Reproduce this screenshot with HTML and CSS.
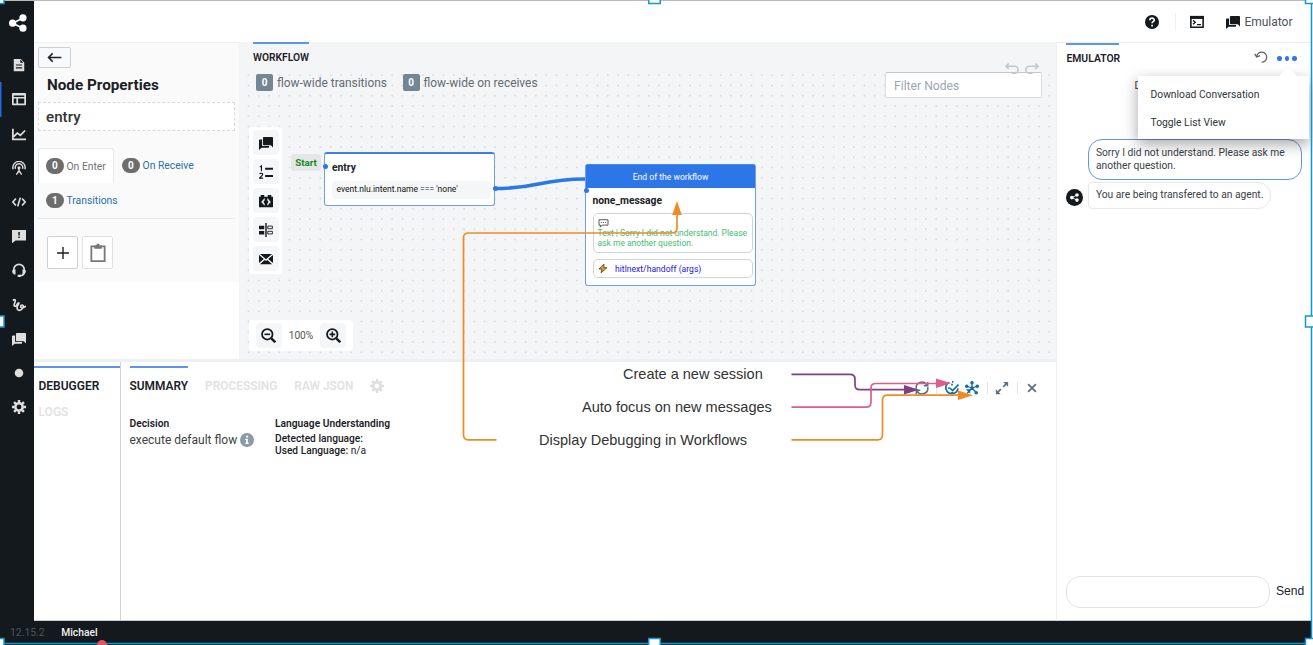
FILE: index.html
```html
<!DOCTYPE html>
<html lang="en">
<head>
<meta charset="utf-8">
<title>Workflow Studio</title>
<link rel="stylesheet" href="styles.css">
</head>
<body>
<svg class="sprite" width="0" height="0">
  <symbol id="share" viewBox="0 0 20 20"><path d="M15.5 4.5 4 10.2l11.5 5.6" fill="none" stroke="currentColor" stroke-width="1.8"/><circle cx="15.5" cy="4.3" r="4"/><circle cx="4" cy="10.2" r="4"/><circle cx="15.5" cy="15.8" r="4"/></symbol>
  <symbol id="doc" viewBox="0 0 16 16"><path fill-rule="evenodd" d="M3 1h7l4 4v10H2V1zM9.500 1.800V5.500H13zM4.500 7.300v1.400h7V7.300zm0 3.400v1.400h7v-1.400z"/></symbol>
  <symbol id="layout" viewBox="0 0 16 16"><path fill-rule="evenodd" d="M1 1h14q1 0 1 1v12q0 1-1 1H1q-1 0-1-1V2q0-1 1-1zm1 3v1.700h12V4zm0 3.500V13h3V7.500zm5 0V13h7V7.500z"/></symbol>
  <symbol id="chart" viewBox="0 0 16 16"><path d="M1 2v12h15M2 11l4-4 3.500 2.500L15 4" fill="none" stroke="currentColor" stroke-width="2"/></symbol>
  <symbol id="antenna" viewBox="0 0 16 16"><g fill="none" stroke="currentColor" stroke-width="1.600"><path d="M1.300 9.500A7 7 0 1 1 14.700 9.500M4 9a4.300 4.300 0 1 1 8 0"/><path d="M8 8v5M8 11l-3 4.500M8 11l3 4.500" /></g><circle cx="8" cy="7.800" r="1.800"/></symbol>
  <symbol id="code" viewBox="0 0 16 16"><path d="M4.500 4 1 8l3.500 4M11.500 4 15 8l-3.500 4M9.500 3l-3 10" fill="none" stroke="currentColor" stroke-width="1.900"/></symbol>
  <symbol id="alertchat" viewBox="0 0 16 16"><path fill-rule="evenodd" d="M0 1h16v12H4l-3.500 3H0zM7.200 3.500v4h1.700v-4zm0 5v1.700h1.700V8.500z"/></symbol>
  <symbol id="headset" viewBox="0 0 16 16"><path d="M2 10V7.500a6 6 0 0 1 12 0V10c0 3-2 4.500-5 4.500" fill="none" stroke="currentColor" stroke-width="1.900"/><path d="M0 8.500 4 7v6H2.500Q0 12 0 8.500zM16 8.500 12 7v6h1.500Q16 12 16 8.500zM6.500 13.500H10V16H6.500z"/></symbol>
  <symbol id="squiggle" viewBox="0 0 16 16"><path d="M1 3C3 1 4.500 2 3.500 4.500S1.500 9 3.500 9.500 6 5.500 7.500 5.500 5.500 9 5.800 11.500 8.500 15 11 13s2.500-5 .5-5-2.500 3.500.5 3 2-1.500 4-1.500" fill="none" stroke="currentColor" stroke-width="1.900"/></symbol>
  <symbol id="chat" viewBox="0 0 16 16"><path d="M5.500 1H15q1 0 1 1v11l-2.500-2.500h-8q-1 0-1-1V2q0-1 1-1zM1 4h2.500v6.500q0 1 1 1H11.500v1q0 1-1 1H3L0 16V5q0-1 1-1z"/></symbol>
  <symbol id="dot" viewBox="0 0 16 16"><circle cx="8" cy="8" r="4.900"/></symbol>
  <symbol id="cog" viewBox="0 0 16 16"><circle cx="8" cy="8" r="4.200" fill="none" stroke="currentColor" stroke-width="2.900"/><path d="M8 0v3M8 13v3M0 8h3M13 8h3M2.350 2.350l2.100 2.100M11.550 11.550l2.100 2.100M2.350 13.650l2.100-2.100M11.550 4.450l2.100-2.100" stroke="currentColor" stroke-width="2.700"/></symbol>
  <symbol id="list" viewBox="0 0 16 16"><path d="M7 3h9v2.300H7zM7 11.500h9v2.300H7z"/><path d="M1 2.500 2.800 1v6M.8 10.500c.2-1.500 3.500-1.600 3.400.3C4.100 12 1.500 13.500.7 15h4" fill="none" stroke="currentColor" stroke-width="1.300"/></symbol>
  <symbol id="codebox" viewBox="0 0 16 16"><path fill-rule="evenodd" d="M2 1h4v2h4V1h4v2h2v12H0V3h2zM6.500 4.500 2.500 9l4 4.500V11L5 9l1.500-2zm3 0V7L11 9l-1.500 2v2.500l4-4.500z"/></symbol>
  <symbol id="split" viewBox="0 0 16 16"><path d="M0 3h6v4H0zM0 9h6v4H0zM7.200 0h1.600v16H7.200z"/><path d="M10 3.500h5.300v3H10zM10 9.500h5.300v3H10z" fill="none" stroke="currentColor"/></symbol>
  <symbol id="mail" viewBox="0 0 16 16"><path d="M0 3.500 5.500 8 0 12.500zM16 3.500 10.500 8l5.500 4.500zM1 2.200h14L8 8.200zM1 14l5.500-5L8 10.200 9.500 9l5.500 5z"/></symbol>
  <symbol id="zoomout" viewBox="0 0 16 16"><circle cx="6.700" cy="6.700" r="5.600" fill="none" stroke="currentColor" stroke-width="1.900"/><path d="m11 11 4.200 4.200" stroke="currentColor" stroke-width="2.600"/><path d="M3.700 5.900h6v1.700h-6z"/></symbol>
  <symbol id="zoomin" viewBox="0 0 16 16"><circle cx="6.700" cy="6.700" r="5.600" fill="none" stroke="currentColor" stroke-width="1.900"/><path d="m11 11 4.200 4.200" stroke="currentColor" stroke-width="2.600"/><path d="M3.700 5.900h2.200V3.700h1.700v2.200h2.200v1.700H7.600v2.200H5.900V7.600H3.700z"/></symbol>
  <symbol id="back" viewBox="0 0 16 12"><path d="M15.500 6H1.500M6 1.500 1.500 6 6 10.500" fill="none" stroke="currentColor" stroke-width="1.700"/></symbol>
  <symbol id="plus" viewBox="0 0 12 12"><path d="M6 0v12M0 6h12" stroke="currentColor" stroke-width="1.400"/></symbol>
  <symbol id="clip" viewBox="0 0 16 20"><path d="M1 3.500h14V19H1z" fill="none" stroke="currentColor" stroke-width="1.900"/><path d="M4 2.500h2Q6.500.5 8 .5t2 2h2V6H4z"/></symbol>
  <symbol id="help" viewBox="0 0 16 16"><circle cx="8" cy="8" r="8"/><path d="M5.500 6c0-3.200 5-3.200 5-.3 0 1.900-2.400 1.900-2.400 3.800M8.100 11v2" fill="none" stroke="#fff" stroke-width="1.900"/></symbol>
  <symbol id="terminal" viewBox="0 0 16 16"><path d="M1 2h14v12H1z" fill="none" stroke="currentColor" stroke-width="1.800"/><path d="M0 1h16v3.500H0z"/><path d="m3.500 6 2.500 2.300-2.500 2.300M8 11h4.500" fill="none" stroke="currentColor" stroke-width="1.500"/></symbol>
  <symbol id="undo" viewBox="0 0 16 12"><path d="M2 3.500h9.500a3.500 3.500 0 0 1 0 7.500H8M5 .5 2 3.500l3 3" fill="none" stroke="currentColor" stroke-width="1.800"/></symbol>
  <symbol id="reset" viewBox="0 0 16 16"><path d="M3 7.500A5.800 5.800 0 1 1 8.500 14M.8 4.500l2.200 3.500 4-1.500" fill="none" stroke="currentColor" stroke-width="1.400"/></symbol>
  <symbol id="info" viewBox="0 0 16 16"><circle cx="8" cy="8" r="8"/><path d="M7 3h2.300v2H7zM6 6.500h3V11h1v1.500H6V11h1V8H6z" fill="#fff"/></symbol>
  <symbol id="refresh" viewBox="0 0 16 16"><path d="M1.500 9A6.500 6.500 0 0 1 13.500 4.500M14.500 7A6.500 6.500 0 0 1 2.500 11.500M14.500 1v4.500H10M1.500 15v-4.500H6" fill="none" stroke="currentColor" stroke-width="1.800"/></symbol>
  <symbol id="autofocus" viewBox="0 0 16 16"><path d="M14.800 8.500A7 7 0 0 1 1.200 9.500 7 7 0 0 1 5 1.700M8 1h1.500M5.500 8l3.200 3L15.500 4M8 3v2M3.500 8h1.800M8 12.500v2" fill="none" stroke="currentColor" stroke-width="1.900"/></symbol>
  <symbol id="graph" viewBox="0 0 16 16"><path d="M8 8V2M8 8 2 6M8 8l6-2M8 8l-5.500 6M8 8l5 5.500" stroke="currentColor" stroke-width="1.500"/><circle cx="8" cy="2" r="2"/><circle cx="2" cy="6" r="2"/><circle cx="14" cy="6" r="2"/><circle cx="12.800" cy="13.500" r="2"/><circle cx="8" cy="8" r="2"/><path d="M1 9.500h5v5z"/></symbol>
  <symbol id="expand" viewBox="0 0 16 16"><path d="M9.500 1H15v5.500zM1 9.500V15h5.500z"/><path d="m9.300 6.700 3.500-3.500M3 13l3.700-3.700" stroke="currentColor" stroke-width="2"/></symbol>
  <symbol id="close" viewBox="0 0 16 16"><path d="m3.500 3.500 9 9M12.500 3.500l-9 9" stroke="currentColor" stroke-width="2"/></symbol>
  <symbol id="bubble" viewBox="0 0 12 10"><path d="M1 .8h10v6H4.500L2.500 9V6.800H1z" fill="none" stroke="currentColor" stroke-width=".9"/><path d="M3 3.500h1.200v1H3zM5.400 3.500h1.200v1H5.400zM7.800 3.500H9v1H7.800z"/></symbol>
  <symbol id="bolt" viewBox="0 0 12 12"><path d="M7.200.8 1.200 6.600h3.600L3.700 11.200 10.800 5H7z" fill="#e8a31c" stroke="#49402c"/></symbol>
</svg>

<div class="app">
  <div class="workspace">
    <nav class="sidebar">
      <a class="logo"><svg><use href="#share"/></svg></a>
      <a><svg><use href="#doc"/></svg></a>
      <a class="current"><svg><use href="#layout"/></svg></a>
      <a><svg><use href="#chart"/></svg></a>
      <a><svg><use href="#antenna"/></svg></a>
      <a><svg><use href="#code"/></svg></a>
      <a><svg><use href="#alertchat"/></svg></a>
      <a><svg><use href="#headset"/></svg></a>
      <a><svg><use href="#squiggle"/></svg></a>
      <a><svg><use href="#chat"/></svg></a>
      <a><svg><use href="#dot"/></svg></a>
      <a><svg><use href="#cog"/></svg></a>
    </nav>
    <div class="main">
      <header class="topbar">
        <svg><use href="#help"/></svg><i></i><svg><use href="#terminal"/></svg><svg class="emu-icon"><use href="#chat"/></svg><span>Emulator</span>
      </header>
      <div class="content">
        <div class="center">
          <div class="upper">
            <section class="props">
              <div class="props-body">
                <button class="back"><svg><use href="#back"/></svg></button>
                <h2>Node Properties</h2>
                <div class="node-name">entry</div>
                <div class="tabs">
                  <span class="tab active"><b>0</b>On Enter</span>
                  <span class="tab"><b>0</b>On Receive</span>
                  <span class="tab"><b>1</b>Transitions</span>
                </div>
                <div class="actions"><button><svg class="plus"><use href="#plus"/></svg></button><button class="muted"><svg class="clip"><use href="#clip"/></svg></button></div>
              </div>
            </section>
            <section class="canvas">
              <svg class="grid" width="816" height="317"><path d="M8.500 33.300h802m-802 10.257h802m-802 10.257h802m-802 10.257h802m-802 10.257h802m-802 10.257h802m-802 10.257h802m-802 10.257h802m-802 10.257h802m-802 10.257h802m-802 10.257h802m-802 10.257h802m-802 10.257h802m-802 10.257h802m-802 10.257h802m-802 10.257h802m-802 10.257h802m-802 10.257h802m-802 10.257h802m-802 10.257h802m-802 10.257h802m-802 10.257h802m-802 10.257h802m-802 10.257h802m-802 10.257h802m-802 10.257h802m-802 10.257h802m-802 10.257h802"/></svg>
              <div class="panel-title">WORKFLOW</div>
              <div class="stats"><b>0</b><span>flow-wide transitions</span><b>0</b><span>flow-wide on receives</span></div>
              <div class="filter">Filter Nodes</div>
              <div class="history"><svg><use href="#undo"/></svg><svg class="redo"><use href="#undo"/></svg></div>
              <div class="tools">
                <i><svg><use href="#chat"/></svg></i><i><svg><use href="#list"/></svg></i><i><svg><use href="#codebox"/></svg></i><i><svg><use href="#split"/></svg></i><i><svg><use href="#mail"/></svg></i>
              </div>
              <div class="zoombar"><i><svg><use href="#zoomout"/></svg></i><span>100%</span><i><svg><use href="#zoomin"/></svg></i></div>
              <svg class="link" width="816" height="317"><path d="M255 146.500C300 146.500 300 137 345 137" fill="none" stroke="#2d76e8" stroke-width="3.600"/></svg>
              <span class="start">Start</span>
              <div class="node entry"><h3>entry</h3><p>event.nlu.intent.name === 'none'</p></div>
              <div class="node message">
                <div class="ending">End of the workflow</div>
                <h3>none_message</h3>
                <div class="card"><svg><use href="#bubble"/></svg><p>Text | Sorry I did not understand. Please ask me another question.</p></div>
                <div class="card action"><svg><use href="#bolt"/></svg><span>hitlnext/handoff (args)</span></div>
              </div>
              <i class="port port-in"></i><i class="port port-out"></i><i class="port port-end"></i>
            </section>
          </div>
          <div class="lower">
            <aside class="dbg-tabs"><b>DEBUGGER</b><b class="off">LOGS</b></aside>
            <section class="dbg">
              <div class="dbg-head">
                <b class="on">SUMMARY</b><b>PROCESSING</b><b>RAW JSON</b><svg><use href="#cog"/></svg>
                <div class="dbg-tools"><svg><use href="#refresh"/></svg><i></i><svg class="blue"><use href="#autofocus"/></svg><svg class="blue graph"><use href="#graph"/></svg><i></i><svg><use href="#expand"/></svg><i></i><svg><use href="#close"/></svg></div>
              </div>
              <div class="summary">
                <div class="decision"><h4>Decision</h4><p>execute default flow <svg><use href="#info"/></svg></p></div>
                <div class="language"><h4>Language Understanding</h4><p><b>Detected language:</b></p><p><b>Used Language:</b> n/a</p></div>
              </div>
            </section>
          </div>
        </div>
        <section class="emulator">
          <div class="emu-head"><b>EMULATOR</b><svg><use href="#reset"/></svg><span class="dots"><i></i><i></i><i></i></span></div>
          <div class="chat">
            <span class="date">D</span>
            <div class="bubble first">Sorry I did not understand. Please ask me another question.</div>
            <div class="row"><span class="avatar"><svg><use href="#share"/></svg></span><div class="bubble">You are being transfered to an agent.</div></div>
          </div>
          <div class="composer"><div class="input"></div><span>Send</span></div>
          <div class="menu"><span>Download Conversation</span><span>Toggle List View</span></div>
        </section>
      </div>
    </div>
  </div>
  <footer><span>12.15.2</span><b>Michael</b></footer>
</div>

<svg class="notes" width="1313" height="645">
  <g fill="none" stroke-width="1.700">
    <path stroke="#7e3f88" d="M791.500 374.300H850Q855 374.300 855 379V385Q855 389.700 860 389.700H905"/>
    <path stroke="#df5d88" d="M791.500 407.200H866Q871 407.200 871 402V388Q871 383.500 876 383.500H937"/>
    <path stroke="#f08b23" d="M791.500 439.800H877.500Q882.500 439.800 882.500 435V400Q882.500 395.200 887.500 395.200H959"/>
    <path stroke="#f08b23" d="M496.500 439.800H468.500Q463.500 439.800 463.500 435V238Q463.500 233 468.500 233H672Q677 233 677 228V214"/>
  </g>
  <path fill="#7e3f88" d="M904 385v9.500l15-4.700z"/>
  <path fill="#df5d88" d="M936 378.500v9.500l15-4.700z"/>
  <path fill="#f08b23" d="M958 390.500v9.500l15-4.700zM672.200 215h9.600L677 201z"/>
  <path d="M0 643.500H1311.500V0" fill="none" stroke="#0f94cf" stroke-width="1.500"/>
  <circle cx="102" cy="645" r="5" fill="#e35361"/>
  <g fill="#fff" stroke="#1597cf" stroke-width="1.500">
    <rect x="-8" y="-8" width="12" height="11.500"/><rect x="648.700" y="-8" width="11.500" height="11.500"/><rect x="1305.500" y="-8" width="12" height="11.500"/>
    <rect x="-8" y="316" width="12" height="11"/><rect x="1305.500" y="316" width="12" height="11"/>
    <rect x="-8" y="638.500" width="12" height="12"/><rect x="648.700" y="638.500" width="11.500" height="12"/><rect x="1305.500" y="638.500" width="12" height="12"/>
  </g>
</svg>
<div class="note n1">Create a new session</div>
<div class="note n2">Auto focus on new messages</div>
<div class="note n3">Display Debugging in Workflows</div>
</body>
</html>
```
FILE: styles.css
```css
* { box-sizing: border-box; }
body { margin: 0; width: 1313px; height: 645px; overflow: hidden; position: relative; font-family: Roboto, sans-serif; color: #1c2127; background: #fff; }
svg { fill: currentColor; display: block; flex: none; }
h2, h3, h4, p { margin: 0; }
i { font-style: normal; }
.sprite { position: absolute; }

.app { display: flex; flex-direction: column; width: 1312px; height: 645px; border-top: 1px solid #b9b9b9; }
.workspace { display: flex; height: 620px; }
footer { flex: 1; display: flex; gap: 16.500px; padding: 5px 0 0 10px; background: #14191d; font-size: 10.400px; line-height: 14px; color: #4b545d; }
footer b { color: #f2f2f2; font-weight: 500; font-size: 10.300px; }

.sidebar { width: 34px; background: #14191d; color: #dedede; display: flex; flex-direction: column; }
.sidebar a { height: 34.200px; display: flex; align-items: center; padding-left: 12px; }
.sidebar svg { width: 14px; height: 14px; }
.sidebar .logo { height: 47.200px; padding: 0 0 4px 9px; color: #fff; }
.sidebar .logo svg { width: 18px; height: 18px; }
.sidebar .current { box-shadow: inset 1.500px 0 #2267e4; }

.main { flex: 1; display: flex; flex-direction: column; }
.topbar { height: 41px; display: flex; align-items: center; justify-content: flex-end; padding-right: 19.500px; font-size: 12px; color: #4d5358; }
.topbar svg { width: 14px; height: 14px; color: #14191d; }
.topbar i { width: 1px; height: 17px; background: #f0f0f0; margin: 0 14.500px 0 16px; }
.topbar .emu-icon { margin: 0 4px 0 22px; }
.content { flex: 1; display: flex; }
.center { width: 1022px; display: flex; flex-direction: column; }
.upper { height: 317px; display: flex; }
.props { width: 206px; border-top: 1px solid #f0f0f0; border-right: 1px solid #f4f4f5; background: #fff; }
.props-body { height: 239px; background: #fafafa; padding: 4px 4px 0; }
button { padding: 0; background: #fff; border: 1px solid #ccd1d5; border-radius: 2px; display: flex; align-items: center; justify-content: center; }
.back { width: 33px; height: 21px; background: #f8f9fa; color: #1c2127; }
.back svg { width: 15px; height: 11px; }
.props h2 { font-size: 15.250px; line-height: 20px; margin: 7px 0 7px 9px; font-weight: 700; }
.node-name { height: 29px; border: 1px dashed #d9d9d9; background: #fff; padding: 0 0 0 7px; font-size: 15.200px; line-height: 28px; font-weight: 500; color: #333; }
.tabs { display: flex; flex-wrap: wrap; margin-top: 17px; border-bottom: 1px solid #e9e9e9; height: 71px; font-size: 10.350px; color: #2b70a5; }
.tab { height: 35px; display: flex; align-items: center; gap: 2.800px; padding: 0 7.200px; border: 1px solid transparent; }
.tab.active { background: #fff; border-color: #e7e7e7; border-bottom: 0; border-radius: 3px 3px 0 0; color: #717171; }
.tab b { width: 17.500px; height: 15.500px; border-radius: 8px; background: #6d6d6d; color: #fff; font-size: 10px; line-height: 16px; text-align: center; }
.actions { display: flex; gap: 4px; padding: 17px 0 0 9px; }
.actions button { width: 31px; height: 33px; color: #222; }
.actions .muted { color: #777; border-color: #e0e0e0; }
.plus { width: 12px; height: 12px; }
.clip { width: 16px; height: 19px; }

.canvas { flex: 1; position: relative; background: #f4f5f7; padding-left: 13px; }
.grid { position: absolute; left: 0; top: 0; }
.grid path { fill: none; stroke: #dbdddf; stroke-width: 2; stroke-linecap: round; stroke-dasharray: 0 10.265; }
.panel-title { position: relative; width: 56px; height: 22px; border-top: 2px solid #5b95ed; font-size: 10.250px; font-weight: 600; line-height: 28px; white-space: nowrap; }
.stats { position: relative; display: flex; align-items: center; height: 37px; margin-left: 3px; font-size: 11.950px; color: #636b73; }
.stats b { width: 17px; height: 17px; background: #738694; border-radius: 2px; color: #fff; font-size: 10px; line-height: 17px; text-align: center; margin-right: 4px; }
.stats span { margin-right: 15.500px; background: #f4f5f7; }
.filter { position: absolute; left: 645px; top: 30px; width: 157px; height: 26px; border: 1px solid #d9dde0; border-top-color: #c3c7ca; border-radius: 2px; background: #fff; padding-left: 8px; font-size: 12.150px; line-height: 26px; color: #9da7b0; }
.history { position: absolute; left: 764px; top: 21px; display: flex; gap: 6px; color: #c4c8cc; }
.history svg { width: 15px; height: 11px; }
.redo { transform: scaleX(-1); }
.tools { position: absolute; left: 9px; top: 85px; width: 33px; background: #fff; border-radius: 3px; padding: 3px 3.500px; display: flex; flex-direction: column; gap: 4px; color: #14191d; }
.tools i, .zoombar i { width: 26px; height: 25px; border-radius: 4px; background: #f5f6f8; display: flex; align-items: center; justify-content: center; }
.tools svg { width: 14px; height: 14px; }
.zoombar { position: absolute; left: 9px; top: 278px; width: 104px; height: 31px; background: #fff; border-radius: 4px; display: flex; align-items: center; justify-content: space-between; padding: 0 6.500px; font-size: 10.200px; color: #555; }
.zoombar svg { width: 15px; height: 15px; color: #14191d; }
.link { position: absolute; left: 0; top: 0; }
.start { position: absolute; left: 51px; top: 112px; width: 30px; height: 17px; border-radius: 3px; background: #e4e6e7; color: #1b8a1b; font-size: 9.800px; font-weight: 700; text-align: center; line-height: 18px; }
.node { position: absolute; background: #fff; border: 1px solid #70a0ed; border-radius: 3px; width: 171px; }
.node h3 { font-size: 10.300px; line-height: 14px; font-weight: 700; }
.entry { left: 84px; top: 109.500px; height: 54.500px; border-top: 2px solid #3b7fe9; padding: 7px 3px 0 7px; }
.entry p { margin-top: 6px; height: 18px; border-radius: 4px; background: #f5f6f7; padding-left: 4.500px; font-size: 8.500px; line-height: 17px; color: #111; white-space: nowrap; }
.message { left: 345px; top: 122px; height: 122px; border-top: 1px solid #4b87e4; }
.ending { height: 23px; background: #2d76e8; color: #fff; text-align: center; font-size: 8.600px; line-height: 25px; }
.message h3 { margin: 6px 0 5px 6.500px; }
.card { margin: 0 2px 0 7px; height: 40px; border: 1px solid #d2d5d5; border-radius: 5px; padding: 4.500px 0 0 3.500px; color: #333; }
.card svg { width: 11px; height: 9px; }
.card p { font-size: 8.500px; line-height: 10px; color: #48bd73; white-space: normal; margin-top: .5px; }
.action { height: 19px; margin-top: 6px; display: flex; align-items: center; padding: 0 0 0 4px; font-size: 8.600px; color: #2714df; gap: 7px; }
.action svg { width: 10px; height: 11px; }
.port { position: absolute; width: 5px; height: 5px; border-radius: 50%; background: #2d76e8; }
.port-in { left: 82.500px; top: 122px; }
.port-out { left: 253px; top: 144px; }
.port-end { left: 343.500px; top: 145.500px; }

.lower { flex: 1; border-top: 3px solid #eef0f0; display: flex; border-bottom: 1px solid #c9c9c9; }
.dbg-tabs { width: 87px; border-right: 1px solid #d3d3d3; display: flex; flex-direction: column; font-size: 12px; padding: 4px 0 0; }
.dbg-tabs b { padding-left: 4.500px; border-top: 2px solid #5b95ed; font-weight: 600; height: 28px; line-height: 36px; }
.dbg-tabs .off, .dbg-head b { color: #e2e2e2; border-color: transparent; }
.dbg-tabs .off { line-height: 32px; }
.dbg { flex: 1; padding: 4px 17px 0 8.500px; }
.dbg-head { display: flex; align-items: center; height: 40px; position: relative; font-size: 11.900px; gap: 17px; }
.dbg-head b { font-weight: 600; height: 40px; line-height: 37px; border-top: 2px solid transparent; }
.dbg-head .on { color: #1c2127; border-color: #5b95ed; }
.dbg-head > svg { width: 14px; height: 14px; color: #dedede; }
.dbg-tools { margin-left: auto; margin-top: 4px; display: flex; align-items: center; color: #5c7080; }
.dbg-tools svg { width: 14px; height: 14px; }
.dbg-tools i { width: 1px; height: 12px; background: #e3e3e3; margin: 0 7.500px; }
.dbg-tools .blue { color: #106ba3; }
.dbg-tools .graph { margin-left: 6.500px; }
.summary { display: flex; margin-top: 11px; }
.summary h4 { font-size: 10.250px; line-height: 14px; font-weight: 600; }
.decision { width: 145.500px; }
.decision p { display: flex; align-items: center; gap: 3px; font-size: 12px; line-height: 18px; color: #3c3f42; white-space: nowrap; }
.decision svg { width: 14px; height: 14px; color: #8a9ba8; }
.language { font-size: 10.200px; line-height: 12.500px; }
.language p b { font-weight: 500; }
.language h4 { margin-bottom: 1.500px; }

.emulator { width: 256px; position: relative; border-top: 1px solid #eee; border-left: 1px solid #eee; border-bottom: 1px solid #c9c9c9; display: flex; flex-direction: column; padding: 0 9px 12px 9.400px; }
.emu-head { display: flex; align-items: center; height: 32px; }
.emu-head b { font-size: 10.400px; font-weight: 600; width: 53px; height: 32px; border-top: 2px solid #5b95ed; line-height: 27px; margin-right: 134.500px; }
.emu-head svg { width: 14px; height: 14px; color: #5c6166; margin-top: -4px; }
.dots { display: flex; gap: 3px; margin: -1px 0 0 9.500px; }
.dots i { width: 4.500px; height: 4.500px; border-radius: 50%; background: #2f76e8; }
.chat { flex: 1; padding: 5px 0 0 22px; font-size: 10.250px; line-height: 12.500px; color: #394047; }
.date { display: block; padding-left: 46px; height: 59px; font-size: 10px; }
.bubble { border: 1px solid #e8e8e8; border-radius: 4px 13px 13px 4px; padding: 6px 6.500px; height: 27px; white-space: nowrap; }
.first { width: 214px; height: 41px; border-color: #5f98ee; border-radius: 14px; white-space: normal; padding-top: 7px; }
.row { display: flex; margin-left: -22px; margin-top: 2px; }
.avatar { width: 17px; height: 17px; border-radius: 50%; background: #14191d; color: #fff; margin: 7px 5px 0 0; display: grid; place-items: center; }
.avatar svg { width: 9px; height: 9px; }
.composer { display: flex; gap: 5.500px; margin-right: -9px; font: 12.100px "Liberation Sans", sans-serif; line-height: 30px; }
.input { width: 204px; height: 32px; border: 1px solid #e3e3e3; border-radius: 14px; }
.menu { position: absolute; left: 81px; top: 33px; width: 171px; height: 63px; background: #fff; box-shadow: 0 5px 14px rgba(0,0,0,.36); display: flex; flex-direction: column; padding: 5px 12.500px; font-size: 10.300px; line-height: 27.500px; color: #30363b; }
.menu::before { content: ""; position: absolute; top: -9px; right: 12px; border: 9px solid transparent; border-top: 0; border-bottom-color: #fff; }

.notes { position: absolute; left: 0; top: 0; }
.note { position: absolute; font: 14.540px/18px "Liberation Sans", sans-serif; color: #333; white-space: nowrap; }
.n1 { left: 623px; top: 365px; }
.n2 { left: 582px; top: 398px; }
.n3 { left: 539px; top: 431px; }
```
